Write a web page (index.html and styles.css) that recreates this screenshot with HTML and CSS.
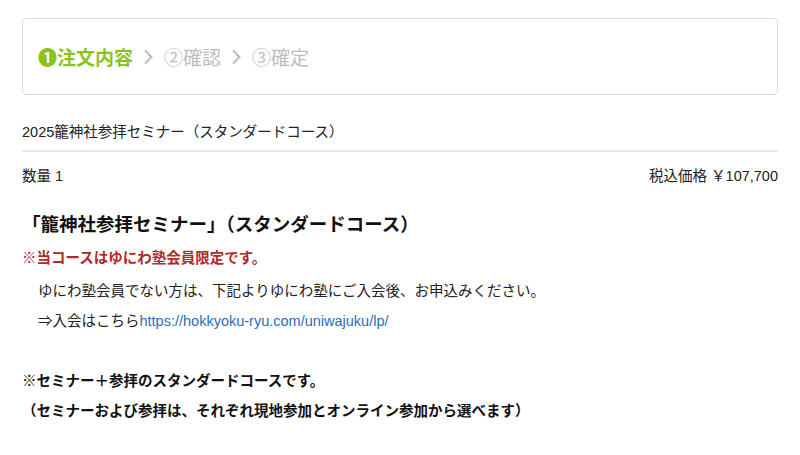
FILE: index.html
```html
<!DOCTYPE html>
<html lang="ja">
<head>
  <meta charset="UTF-8" />
  <meta name="viewport" content="width=device-width, initial-scale=1" />
  <title>注文内容</title>
  <link rel="stylesheet" href="styles.css">
</head>
<body>

<!-- Steps -->
<div class="steps">
  <span class="step current">❶注文内容</span>
  <svg class="chev" width="11" height="16" viewBox="0 0 11 16"><path d="M2 1.5 L8.5 8 L2 14.5" fill="none" stroke="#bcbcbc" stroke-width="2"/></svg>
  <span class="step">②確認</span>
  <svg class="chev" width="11" height="16" viewBox="0 0 11 16"><path d="M2 1.5 L8.5 8 L2 14.5" fill="none" stroke="#bcbcbc" stroke-width="2"/></svg>
  <span class="step">③確定</span>
</div>

<div class="item-name">2025籠神社参拝セミナー（スタンダードコース）</div>

<div class="item-row">
  <span>数量 1</span>
  <span>税込価格 ￥107,700</span>
</div>

<div class="desc">
  <h2 class="desc-title">「籠神社参拝セミナー」（スタンダードコース）</h2>
  <p class="notice">※当コースはゆにわ塾会員限定です。</p>
  <p class="indent">ゆにわ塾会員でない方は、下記よりゆにわ塾にご入会後、お申込みください。</p>
  <p class="indent">⇒入会はこちら<a href="#">https://hokkyoku-ryu.com/uniwajuku/lp/</a></p>
  <p class="blank">&nbsp;</p>
  <p class="strong">※セミナー＋参拝のスタンダードコースです。</p>
  <p class="strong">（セミナーおよび参拝は、それぞれ現地参加とオンライン参加から選べます）</p>
</div>

</body>
</html>
```

FILE: styles.css
```css
body {
  margin: 0;
  padding: 18px 22px;
  font-family: "Liberation Sans", "Noto Sans CJK JP", sans-serif;
  font-size: 14.5px;
  color: #222;
  background: #fff;
}

.steps {
  display: flex;
  align-items: center;
  gap: 10px;
  height: 75px;
  padding: 0 15px;
  border: 1px solid #dcdcdc;
  border-radius: 4px;
  font-size: 19px;
}

.step {
  color: #bdbdbd;
  font-weight: 400;
}

.step.current {
  color: #8cc21f;
  font-weight: 700;
}

.item-name {
  margin-top: 27px;
  padding-bottom: 8px;
  border-bottom: 2px solid #e6e6e6;
  line-height: 20px;
}

.item-row {
  display: flex;
  justify-content: space-between;
  margin-top: 14px;
  line-height: 20px;
}

.desc {
  margin-top: 27px;
}

.desc-title {
  margin: 0;
  font-size: 18.5px;
  font-weight: 700;
  line-height: 24px;
  color: #111;
}

.desc p {
  margin: 0;
  line-height: 30px;
}

.notice {
  color: #b02a2a;
  font-weight: 700;
  margin-top: 6px !important;
}

.notice + .indent {
  margin-top: 3px;
}

.indent {
  padding-left: 16px;
}

.indent a {
  color: #2a6ebb;
  text-decoration: none;
}

.strong {
  font-weight: 700;
  color: #111;
}
```
